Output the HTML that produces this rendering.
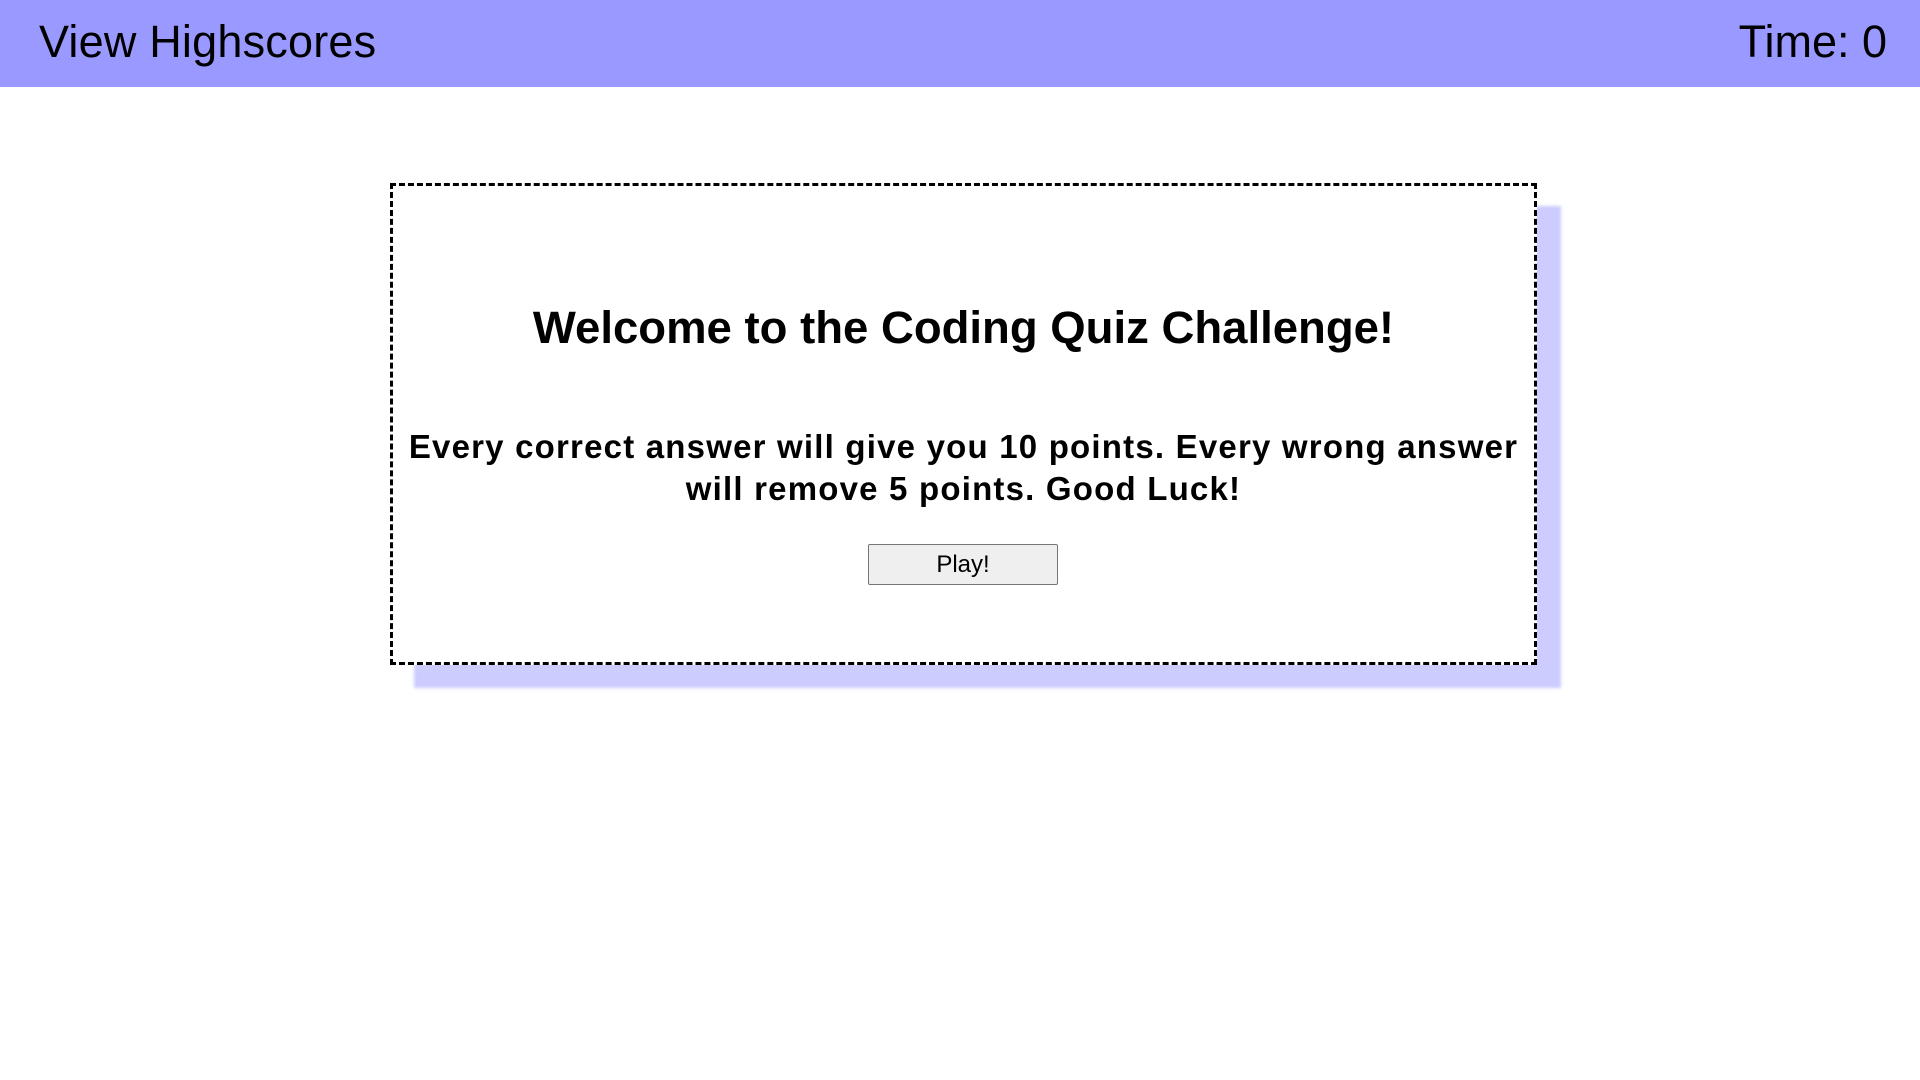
<!DOCTYPE html>
<html><head><style>
body{margin:0;width:1920px;height:1080px;background:#fff;font-family:"Liberation Sans",Arial,sans-serif;position:relative;overflow:hidden}
.hdr{position:absolute;left:0;top:0;width:1920px;height:87px;background:#9999ff;font-size:45px;color:#000}
.hdr .l{position:absolute;left:39px;top:16px;letter-spacing:0.2px}
.hdr .r{position:absolute;right:33px;top:16px}
.box{position:absolute;left:390px;top:183px;width:1141px;height:476px;border:3px dashed #000;box-shadow:24px 23px 3px #ccccff;background:#fff;text-align:center}
h1{position:absolute;left:0;right:0;top:116px;margin:0;font-size:45.5px;font-weight:bold}
p{position:absolute;left:5px;right:5px;top:240px;margin:0;font-size:33px;font-weight:bold;line-height:42px;letter-spacing:1.2px}
button{position:absolute;left:475px;top:358px;width:190px;height:41px;font-family:"Liberation Sans",Arial,sans-serif;font-size:24px;background:#efefef;border:1px solid #767676;border-radius:2px;padding:0}
</style></head><body>
<div class="hdr"><span class="l">View Highscores</span><span class="r">Time: 0</span></div>
<div class="box">
<h1>Welcome to the Coding Quiz Challenge!</h1>
<p>Every correct answer will give you 10 points. Every wrong answer will remove 5 points. Good Luck!</p>
<button>Play!</button>
</div>
</body></html>
